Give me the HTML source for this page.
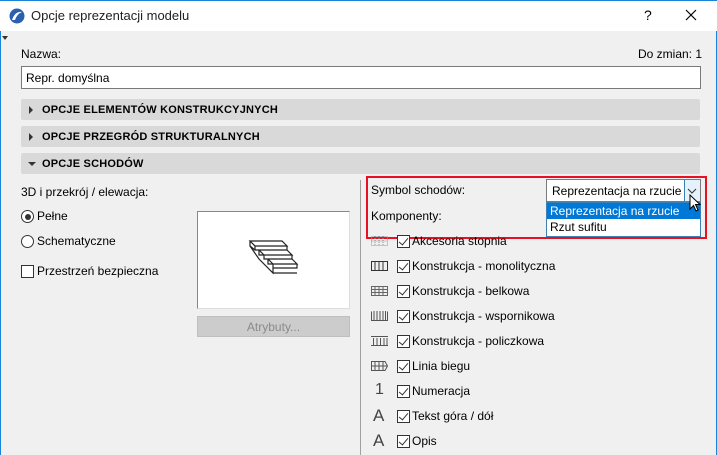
<!DOCTYPE html>
<html><head><meta charset="utf-8"><style>
*{box-sizing:border-box;margin:0;padding:0}
body{width:717px;height:455px;overflow:hidden;background:#f0f0f0;font-family:"Liberation Sans",sans-serif;font-size:12px;color:#000;position:relative}
.a{position:absolute}
.title{left:0;top:0;width:717px;height:31px;background:#fff}
.bar{left:21px;width:679px;height:21px;background:#d9d9d9;border-radius:2px;font-weight:bold;font-size:11px;padding:5px 0 0 21px;letter-spacing:0.2px}
.tri{position:absolute;left:8px;top:7px;width:0;height:0;border-top:4px solid transparent;border-bottom:4px solid transparent;border-left:4px solid #333}
.trid{position:absolute;left:7px;top:9px;border-left:4px solid transparent;border-right:4px solid transparent;border-top:4px solid #333}
.cb{width:12px;height:12px;border:1px solid #333;background:#fff}
.ck{position:absolute;left:397px;width:13px;height:13px;border:1px solid #333;background:#fff}
.ck:after{content:"";position:absolute;left:3px;top:0px;width:4px;height:8px;border:solid #333;border-width:0 1.3px 1.3px 0;transform:rotate(40deg)}
.lbl{position:absolute;left:412px}
.ic{position:absolute;left:371px;width:17px;height:10px}
</style></head><body>
<div class="a" style="left:0;top:0;width:1px;height:455px;background:#1883d7"></div>
<div class="a" style="left:716px;top:0;width:1px;height:455px;background:#1883d7"></div>
<div class="a title"></div>
<div class="a" style="left:0;top:0;width:717px;height:1px;background:#1883d7"></div>
<svg class="a" style="left:9px;top:8px" width="16" height="16"><circle cx="8" cy="8" r="7.5" fill="#2b5fb0"/><path d="M3 12 Q6 3 13 4 Q8 6 6 12Z" fill="#fff"/></svg>
<div class="a" style="left:31px;top:8px;font-size:13px;color:#222">Opcje reprezentacji modelu</div>
<div class="a" style="left:644px;top:7px;font-size:14px">?</div>
<svg class="a" style="left:685px;top:9px" width="12" height="12"><path d="M1 1L11 11M11 1L1 11" stroke="#000" stroke-width="1.2"/></svg>
<div class="a" style="left:2px;top:36px;border-left:3px solid transparent;border-right:3px solid transparent;border-top:4px solid #333"></div>
<div class="a" style="left:21px;top:47px">Nazwa:</div>
<div class="a" style="left:638px;top:47px">Do zmian: 1</div>
<div class="a" style="left:21px;top:66px;width:680px;height:23px;background:#fff;border:1px solid #7a7a7a;padding:4px 0 0 4px">Repr. domyślna</div>
<div class="a bar" style="top:99px"><span class="tri"></span>OPCJE ELEMENTÓW KONSTRUKCYJNYCH</div>
<div class="a bar" style="top:126px"><span class="tri"></span>OPCJE PRZEGRÓD STRUKTURALNYCH</div>
<div class="a bar" style="top:153px"><span class="trid"></span>OPCJE SCHODÓW</div>
<div class="a" style="left:21px;top:185px">3D i przekrój / elewacja:</div>
<div class="a" style="left:21px;top:210px;width:13px;height:13px;border:1px solid #333;border-radius:50%;background:#fff"><div style="margin:2.5px;width:6px;height:6px;border-radius:50%;background:#333"></div></div>
<div class="a" style="left:37px;top:209px">Pełne</div>
<div class="a" style="left:21px;top:235px;width:13px;height:13px;border:1px solid #333;border-radius:50%;background:#fff"></div>
<div class="a" style="left:37px;top:234px">Schematyczne</div>
<div class="a cb" style="left:21px;top:265px;width:13px;height:13px"></div>
<div class="a" style="left:37px;top:264px">Przestrzeń bezpieczna</div>
<div class="a" style="left:197px;top:211px;width:153px;height:98px;background:#fff;border:1px solid #888;border-right-color:#ddd;border-bottom-color:#ddd"></div>
<svg class="a" style="left:245px;top:236px" width="65" height="50" fill="none" stroke="#222" stroke-width="1.2"><path d="M5 5H37L42 10H10ZM10 10V14H42V10M5 5V10L10 14M14 14V19H47L42 14M19 19V23H47V19M14 14L19 19M23 23V28H52L47 23M28 28V32H52V28M23 23L28 28M5 10L14 23L28 37V32M28 37H52"/></svg>
<div class="a" style="left:197px;top:316px;width:153px;height:21px;background:#cccccc;border:1px solid #bfbfbf;color:#8a8a8a;text-align:center;padding-top:3px">Atrybuty...</div>
<div class="a" style="left:360px;top:180px;width:1px;height:275px;background:#a0a0a0"></div>
<div class="a" style="left:366px;top:176px;width:341px;height:63px;border:2px solid #e81123"></div>
<div class="a" style="left:371px;top:183px">Symbol schodów:</div>
<div class="a" style="left:371px;top:209px">Komponenty:</div>
<div class="a" style="left:546px;top:179px;width:155px;height:23px;background:#fff;border:1px solid #7a7a7a;padding:4px 0 0 5px">Reprezentacja na rzucie</div>
<div class="a" style="left:684px;top:180px;width:16px;height:21px;background:#e5f1fb;border-left:1px solid #3c7fb1"></div>
<svg class="a" style="left:687px;top:188px" width="10" height="6"><path d="M1 1L5 5L9 1" stroke="#333" fill="none"/></svg>
<div class="a" style="left:546px;top:202px;width:155px;height:35px;background:#fff;border:1px solid #3c7fb1"></div>
<div class="a" style="left:547px;top:203px;width:153px;height:16px;background:#0078d7;color:#fff;padding:1px 0 0 3px">Reprezentacja na rzucie</div>
<div class="a" style="left:550px;top:220px">Rzut sufitu</div>
<svg class="a" style="left:689px;top:194px" width="14" height="20"><path d="M1 1V15L4.5 11.5L7 17L9 16L6.5 10.5H11Z" fill="#fff" stroke="#000"/></svg>
<svg class="ic" style="top:236px"><path d="M0.5 0.5H16.5V9.5H0.5ZM0.5 5H16.5M4 0V10M8 0V10M12 0V10" stroke="#999" fill="none" stroke-dasharray="1 1"/></svg>
<div class="ck" style="top:235px"></div><div class="lbl" style="top:234px">Akcesoria stopnia</div>
<svg class="ic" style="top:261px"><path d="M0.5 0.5H16.5V9.5H0.5ZM4 0V10M8 0V10M12 0V10" stroke="#333" fill="none"/></svg>
<div class="ck" style="top:260px"></div><div class="lbl" style="top:259px">Konstrukcja - monolityczna</div>
<svg class="ic" style="top:286px"><path d="M0.5 0.5H16.5V9.5H0.5ZM0 3.5H17M0 6.5H17M4 0V10M8 0V10M12 0V10" stroke="#666" fill="none"/></svg>
<div class="ck" style="top:285px"></div><div class="lbl" style="top:284px">Konstrukcja - belkowa</div>
<svg class="ic" style="top:311px"><path d="M0.5 0.5V9.5H16.5V0.5M3 0V10M6 0V10M9 0V10M12 0V10M14.5 0V10" stroke="#555" fill="none"/></svg>
<div class="ck" style="top:310px"></div><div class="lbl" style="top:309px">Konstrukcja - wspornikowa</div>
<svg class="ic" style="top:336px"><path d="M0 0.5H17M0 9.5H17M2.5 2V9M6 2V9M9.5 2V9M13 2V9M16 2V9" stroke="#555" fill="none"/></svg>
<div class="ck" style="top:335px"></div><div class="lbl" style="top:334px">Konstrukcja - policzkowa</div>
<svg class="ic" style="top:361px"><path d="M0.5 0.5H14L16.5 5L14 9.5H0.5ZM0 5H16M4 0V10M8 0V10M12 0V10" stroke="#555" fill="none"/></svg>
<div class="ck" style="top:360px"></div><div class="lbl" style="top:359px">Linia biegu</div>
<div class="a" style="left:375px;top:381px;font-size:16px;color:#444">1</div>
<div class="ck" style="top:385px"></div><div class="lbl" style="top:384px">Numeracja</div>
<div class="a" style="left:373px;top:406px;font-size:17px;color:#444">A</div>
<div class="ck" style="top:410px"></div><div class="lbl" style="top:409px">Tekst góra / dół</div>
<div class="a" style="left:373px;top:431px;font-size:17px;color:#444">A</div>
<div class="ck" style="top:435px"></div><div class="lbl" style="top:434px">Opis</div>
</body></html>
